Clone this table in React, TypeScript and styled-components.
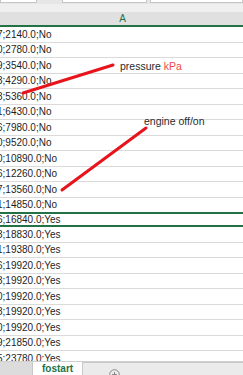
import React from 'react';
import styled, { createGlobalStyle } from 'styled-components';

const GlobalStyle = createGlobalStyle`
  html, body {
    margin: 0;
    padding: 0;
    background: #ffffff;
  }
  body {
    font-family: 'Liberation Sans', Arial, sans-serif;
  }
`;

const GREEN = '#217346';

const rows: { lead: string; value: string; flag: 'No' | 'Yes' }[] = [
  { lead: '7', value: '2140.0', flag: 'No' },
  { lead: '0', value: '2780.0', flag: 'No' },
  { lead: '9', value: '3540.0', flag: 'No' },
  { lead: '3', value: '4290.0', flag: 'No' },
  { lead: '8', value: '5360.0', flag: 'No' },
  { lead: '1', value: '6430.0', flag: 'No' },
  { lead: '6', value: '7980.0', flag: 'No' },
  { lead: '0', value: '9520.0', flag: 'No' },
  { lead: '0', value: '10890.0', flag: 'No' },
  { lead: '6', value: '12260.0', flag: 'No' },
  { lead: '7', value: '13560.0', flag: 'No' },
  { lead: '1', value: '14850.0', flag: 'No' },
  { lead: '6', value: '16840.0', flag: 'Yes' },
  { lead: '3', value: '18830.0', flag: 'Yes' },
  { lead: '1', value: '19380.0', flag: 'Yes' },
  { lead: '6', value: '19920.0', flag: 'Yes' },
  { lead: '3', value: '19920.0', flag: 'Yes' },
  { lead: '0', value: '19920.0', flag: 'Yes' },
  { lead: '8', value: '19920.0', flag: 'Yes' },
  { lead: '0', value: '19920.0', flag: 'Yes' },
  { lead: '9', value: '21850.0', flag: 'Yes' },
  { lead: '5', value: '23780.0', flag: 'Yes' },
];

const SELECTED = 12;

export default function App() {
  return (
    <>
      <GlobalStyle />
      <Sheet>
        <Ribbon>
          <RibbonBox $w={37} />
          <RibbonGap $w={25} />
          <RibbonBox $w={85} />
          <RibbonGap $w={3} />
          <RibbonBox $w={93} />
        </Ribbon>
        <RibbonShade />
        <ColumnHeader>A</ColumnHeader>
        <Grid>
          {rows.map((r, i) => (
            <Row key={i} $selected={i === SELECTED}>
              <Cell>
                {r.lead};{r.value};{r.flag}
              </Cell>
            </Row>
          ))}
        </Grid>
        <TabBar>
          <TabNav />
          <Tab>fostart</Tab>
          <TabRest>
            <AddSheet>
              <svg width="11" height="11" viewBox="0 0 11 11">
                <circle cx="5.5" cy="5.5" r="4.8" fill="none" stroke="#8a8a8a" strokeWidth="1" />
                <path d="M5.5 3v5M3 5.5h5" stroke="#8a8a8a" strokeWidth="1" />
              </svg>
            </AddSheet>
          </TabRest>
        </TabBar>

        <Marks width="243" height="375" viewBox="0 0 243 375">
          <line x1="23" y1="93" x2="113" y2="65" stroke="#e8141c" strokeWidth="3" strokeLinecap="round" />
          <line x1="62" y1="190" x2="146" y2="128" stroke="#e8141c" strokeWidth="3" strokeLinecap="round" />
        </Marks>
        <Label $x={120} $y={60}>
          pressure <Unit>kPa</Unit>
        </Label>
        <Label $x={144} $y={115}>engine off/on</Label>
      </Sheet>
    </>
  );
}

const Sheet = styled.div`
  position: relative;
  width: 243px;
  height: 375px;
  overflow: hidden;
  display: flex;
  flex-direction: column;
  background: #ffffff;
`;

const Ribbon = styled.div`
  display: flex;
  height: 4px;
  background: #e6e6e6;
`;

const RibbonBox = styled.div<{ $w: number }>`
  width: ${(p) => p.$w}px;
  height: 3px;
  background: #ffffff;
  border-bottom: 1px solid #c6c6c6;
  border-left: 1px solid #c6c6c6;
  border-right: 1px solid #c6c6c6;
  box-sizing: border-box;
`;

const RibbonGap = styled.div<{ $w: number }>`
  width: ${(p) => p.$w}px;
`;

const RibbonShade = styled.div`
  height: 8px;
  background: #efefef;
`;

const ColumnHeader = styled.div`
  height: 13px;
  background: #e0e0e0;
  border-bottom: 2px solid ${GREEN};
  color: ${GREEN};
  font-size: 10px;
  line-height: 14px;
  text-align: center;
  padding-left: 2px;
`;

const Grid = styled.div`
  flex: 1;
  overflow: hidden;
`;

const Row = styled.div<{ $selected: boolean }>`
  box-sizing: border-box;
  height: 15.5px;
  border-bottom: ${(p) => (p.$selected ? `2px solid ${GREEN}` : '1px solid #dadada')};
  border-top: ${(p) => (p.$selected ? `2px solid ${GREEN}` : 'none')};
  margin-top: ${(p) => (p.$selected ? '-1.5px' : '0')};
  display: flex;
  align-items: center;
  overflow: hidden;
`;

const Cell = styled.span`
  margin-left: -3px;
  font-size: 10px;
  color: #1e1e1e;
  white-space: nowrap;
`;

const TabBar = styled.div`
  height: 14px;
  flex-shrink: 0;
  display: flex;
  background: #e3e3e3;
  border-top: 1px solid #d0d0d0;
  box-sizing: border-box;
`;

const TabNav = styled.div`
  width: 32px;
  background: #dcdcdc;
  border-right: 1px solid #c8c8c8;
`;

const Tab = styled.div`
  width: 49px;
  background: #ffffff;
  color: ${GREEN};
  font-weight: bold;
  font-size: 10px;
  line-height: 14px;
  padding-left: 9px;
  box-sizing: border-box;
`;

const TabRest = styled.div`
  flex: 1;
  background: #ebebeb;
  border-left: 1px solid #c8c8c8;
  border-top: 1px solid #c8c8c8;
  padding-left: 26px;
`;

const AddSheet = styled.div`
  padding-top: 3px;
`;

const Marks = styled.svg`
  position: absolute;
  left: 0;
  top: 0;
  pointer-events: none;
`;

const Label = styled.div<{ $x: number; $y: number }>`
  position: absolute;
  left: ${(p) => p.$x}px;
  top: ${(p) => p.$y}px;
  font-size: 10.5px;
  line-height: 13px;
  color: #2b2b2b;
  white-space: nowrap;
`;

const Unit = styled.span`
  color: #f04848;
`;
